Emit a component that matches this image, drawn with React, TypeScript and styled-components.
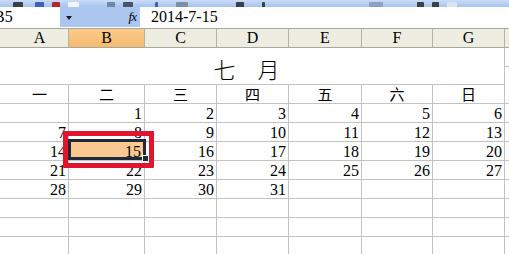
import React from 'react'
import styled, { createGlobalStyle, css } from 'styled-components'

const GlobalStyle = createGlobalStyle`
  html, body {
    margin: 0;
    padding: 0;
    background: #ffffff;
    overflow: hidden;
  }
`

const serif = `"Liberation Serif", "Noto Sans CJK SC", serif`
const cjk = `"Noto Sans CJK SC", "Liberation Serif", sans-serif`

const Window = styled.div`
  width: 530px;
  margin-left: -11px;
  font-family: ${serif};
  color: #000;
`

const Toolbar = styled.div`
  height: 7px;
  display: flex;
  align-items: flex-end;
  gap: 8px;
  padding-left: 24px;
  background: linear-gradient(#c9dcf7, #a7c3ee);
  overflow: hidden;
`

const ToolIcon = styled.span<{ $color: string; $w?: number; $ml?: number }>`
  display: block;
  width: ${p => p.$w ?? 9}px;
  height: 5px;
  margin-left: ${p => p.$ml ?? 0}px;
  background: ${p => p.$color};
  border-radius: 1px 1px 0 0;
`

const FormulaBar = styled.div`
  height: 21px;
  display: flex;
  background: #abc7ef;
  border-bottom: 1px solid #ffffff;
  box-sizing: border-box;
`

const NameBox = styled.div`
  width: 71px;
  background: #ffffff;
  font-size: 16px;
  line-height: 20px;
  padding-left: 5px;
  box-sizing: border-box;
`

const FormulaTools = styled.div`
  width: 80px;
  display: flex;
  align-items: center;
  justify-content: space-between;
  padding: 0 4px 0 6px;
  box-sizing: border-box;
`

const DropArrow = styled.span`
  width: 0;
  height: 0;
  border-left: 3px solid transparent;
  border-right: 3px solid transparent;
  border-top: 4px solid #1a1a1a;
  margin-top: 1px;
`

const Fx = styled.span`
  font-family: ${serif};
  font-style: italic;
  font-size: 13px;
  letter-spacing: -1px;
`

const FormulaInput = styled.div`
  flex: 1;
  background: #ffffff;
  font-size: 16px;
  line-height: 20px;
  padding-left: 11px;
`

const Sheet = styled.div`
  display: grid;
  grid-template-columns: 80px 76px 72px 72px 73px 71px 72px 1fr;
`

const HeadCell = styled.div<{ $active?: boolean }>`
  height: 20px;
  box-sizing: border-box;
  border-top: 1px solid #a8a79b;
  border-bottom: 1px solid #a8a79b;
  border-right: 1px solid #b4b2a6;
  background: ${p => (p.$active ? 'linear-gradient(#fbcb8a, #f6bb70)' : '#eeede2')};
  font-size: 16px;
  line-height: 18px;
  text-align: center;
  padding-left: ${p => (p.$active ? 0 : 0)}px;
`

const FirstHead = styled(HeadCell)`
  padding-left: 22px;
`

const Cell = styled.div<{ $center?: boolean; $selected?: boolean }>`
  height: 19px;
  box-sizing: border-box;
  border-right: 1px solid #c2c2c2;
  border-bottom: 1px solid #c2c2c2;
  font-size: 16px;
  line-height: 19px;
  text-align: right;
  padding-right: 2px;
  ${p =>
    p.$center &&
    css`
      text-align: center;
      padding-right: 0;
      font-family: ${cjk};
      font-size: 15px;
      line-height: 18px;
    `}
  ${p =>
    p.$selected &&
    css`
      position: relative;
      background: #fdc791;
      padding-right: 3px;
    `}
`

const TitleCell = styled.div`
  grid-column: span 7;
  height: 37px;
  box-sizing: border-box;
  border-right: 1px solid #c2c2c2;
  border-bottom: 1px solid #c2c2c2;
  display: flex;
  align-items: flex-end;
  justify-content: center;
  padding-bottom: 2px;
  font-family: ${cjk};
  font-size: 22px;
  line-height: 28px;
  font-weight: 300;
`

const SelectionFrame = styled.span`
  position: absolute;
  top: -3px;
  left: -1px;
  right: -2px;
  bottom: 0;
  border: 3px solid #1e2a3a;
  pointer-events: none;
`

const FillHandle = styled.span`
  position: absolute;
  right: -4px;
  bottom: -1px;
  width: 5px;
  height: 5px;
  background: #1e2a3a;
  outline: 1px solid #ffffff;
  z-index: 2;
`

const Annotation = styled.span`
  position: absolute;
  top: -11px;
  left: -6px;
  right: -10px;
  bottom: -8px;
  border: 5px solid #e1152e;
  border-radius: 1px;
  z-index: 3;
  pointer-events: none;
`

const columns = ['A', 'B', 'C', 'D', 'E', 'F', 'G']
const weekdays = ['一', '二', '三', '四', '五', '六', '日']
const weeks: (number | null)[][] = [
  [null, 1, 2, 3, 4, 5, 6],
  [7, 8, 9, 10, 11, 12, 13],
  [14, 15, 16, 17, 18, 19, 20],
  [21, 22, 23, 24, 25, 26, 27],
  [28, 29, 30, 31, null, null, null],
  [null, null, null, null, null, null, null],
  [null, null, null, null, null, null, null],
  [null, null, null, null, null, null, null],
]

const App = () => {
  return (
    <Window>
      <GlobalStyle />
      <Toolbar>
        <ToolIcon $color="#3b3f48" $w={10} />
        <ToolIcon $color="#3a63b8" $w={9} $ml={4} />
        <ToolIcon $color="#b3262a" $w={8} />
        <ToolIcon $color="#f4f4f4" $w={11} />
        <ToolIcon $color="#6f86ad" $w={8} $ml={20} />
        <ToolIcon $color="#4b5466" $w={10} />
        <ToolIcon $color="#3a63b8" $w={3} $ml={14} />
        <ToolIcon $color="#7d8fa8" $w={12} $ml={10} />
        <ToolIcon $color="#3b3f48" $w={8} $ml={40} />
        <ToolIcon $color="#3b3f48" $w={3} $ml={10} />
        <ToolIcon $color="#8aa0c4" $w={14} $ml={96} />
        <ToolIcon $color="#3b3f48" $w={7} $ml={26} />
        <ToolIcon $color="#3b3f48" $w={7} />
        <ToolIcon $color="#d9e4f3" $w={10} />
      </Toolbar>
      <FormulaBar>
        <NameBox>B5</NameBox>
        <FormulaTools>
          <DropArrow />
          <Fx>fx</Fx>
        </FormulaTools>
        <FormulaInput>2014-7-15</FormulaInput>
      </FormulaBar>
      <Sheet>
        {columns.map((c, i) =>
          i === 0 ? (
            <FirstHead key={c}>{c}</FirstHead>
          ) : (
            <HeadCell key={c} $active={c === 'B'}>
              {c}
            </HeadCell>
          )
        )}
        <HeadCell />

        <TitleCell>七　月</TitleCell>
        <Cell />

        {weekdays.map((d, i) => (
          <Cell key={d} $center style={i === 0 ? { paddingLeft: 22 } : undefined}>
            {d}
          </Cell>
        ))}
        <Cell />

        {weeks.map((week, r) => (
          <React.Fragment key={r}>
            {week.map((day, c) => {
              const selected = day === 15
              return (
                <Cell key={c} $selected={selected}>
                  {day ?? ''}
                  {selected && (
                    <>
                      <SelectionFrame />
                      <FillHandle />
                      <Annotation />
                    </>
                  )}
                </Cell>
              )
            })}
            <Cell />
          </React.Fragment>
        ))}
      </Sheet>
    </Window>
  )
}

export default App
